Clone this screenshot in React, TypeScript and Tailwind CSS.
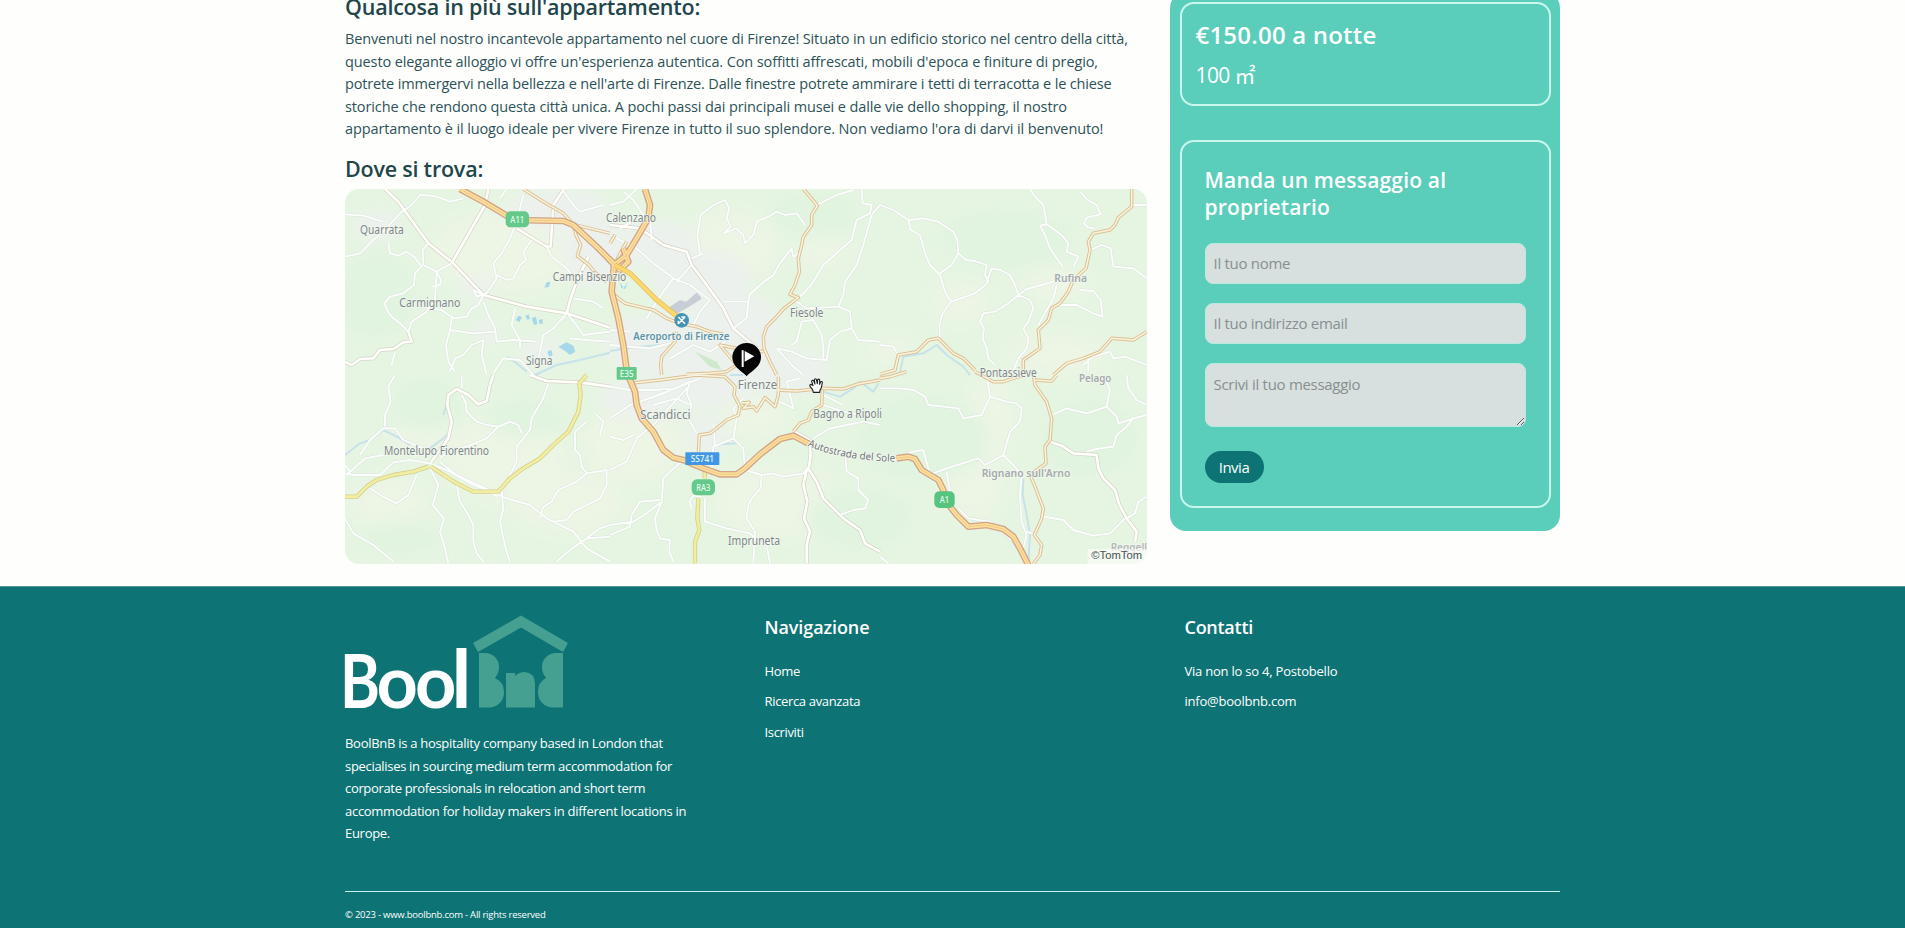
import type { ReactNode } from "react";

type RoadKind = "minor" | "main" | "secondary" | "yellow" | "motorway" | "link" | "river";

type Tile = { at: [number, number]; roads: Partial<Record<RoadKind, string>> };

const tiles: Tile[] = [
  {
    at: [0, 0],
    roads: {
      main: "M135 12L175 50L265 175L340 235L430 330L560 365L680 385L810 428M445 12L435 60L335 235M530 130L620 185L632 184L640 60L672 12M680 385L692 340L710 290L745 215M205 440L215 470L190 472L160 492L120 495L100 520L60 522L35 540L15 530",
      minor:
        "M15 88L70 92L130 110M15 215L60 205L100 165L130 140L180 85L215 60L240 30L270 32L290 35L330 50L370 40M145 170L150 205L175 212L200 200L222 215L245 245M265 175L248 195L250 240L290 260L303 285L300 300L275 305M248 240L225 265L222 300L190 325L150 335L133 355L145 382L160 400L180 415L205 440M205 440L215 410L260 380L285 345L290 260L335 235M260 370L305 375L340 400L380 395L395 370L415 360L430 330M430 330L400 315L410 335L440 325L470 280L460 235L485 205L510 160L530 110L550 30M430 350L445 390L465 430L470 470L520 465L590 470M335 400L330 435L400 445L465 440M330 435L318 480L325 530L345 560M430 465L395 480L370 510L345 520L330 560M430 465L425 510L440 570M525 370L515 420L540 465L540 490M680 385L640 430L610 450L595 520M685 390L705 415L730 450L810 440M575 165L550 200L558 225L540 240L520 280L500 285L470 270M620 185L635 215L680 250L710 290M672 20L700 60L720 80L790 60M480 40L500 12M155 540L165 500M460 565L490 520L540 525L580 570M690 460L740 465L810 470M700 340L760 350L790 370",
      motorway: "M360 12L430 50L500 92L530 105L670 108L700 120L770 185L820 235",
      secondary: "M550 12L610 50L670 85L700 118L810 145M700 118L708 150L722 180L712 213L745 238L765 262L800 290",
      river: "M585 570L650 540L720 525L810 503M500 515L530 535L560 560",
    },
  },
  {
    at: [810, 0],
    roads: {
      main: "M0 120L90 130L160 180L230 200L245 240L290 300L340 370L370 430L440 490",
      minor:
        "M0 150L80 190L130 235L190 280L240 300L300 345M0 60L40 50L80 12M125 165L120 100M40 20L70 45L100 90L30 130M270 205L262 150L272 90L310 60L345 45L358 70L350 100L362 125L340 145L378 130L400 150L405 175L430 150L440 110L475 95L500 80L525 90L560 85L585 120M245 220L280 205M410 390L418 330L450 300L490 270L510 235L545 190L550 215L565 205M755 12L758 55L785 60L780 85L740 105L725 165L690 195L640 240L600 305L560 345M810 60L785 90L760 180L740 240L705 290L700 330L685 365M560 350L590 370L685 365L720 380L725 430L690 440L660 465L650 525L590 520L545 500L500 490M725 430L745 465L810 470M620 60L680 30L730 15M545 480L560 470L575 410L610 405L635 450L640 490L640 520M190 280L160 320L140 350L110 400M370 430L410 400L415 350L340 350M500 490L545 540L580 570M300 345L270 380L250 420M245 240L200 290M0 435L60 440M0 480L120 490L200 470M360 460L300 500L250 480L180 520",
      motorway: "M105 12L120 60L115 100L80 160L50 210L12 240L5 320L25 400L40 480L52 570M40 190L55 230L30 255L-5 220",
      link: "M15 240L60 265L140 345L215 405",
      secondary:
        "M0 320L45 355L130 375L170 400L210 415L260 425L300 440L340 448M580 12L600 35L622 62L605 90L605 120L580 155L575 180L565 220L568 260L555 300L540 328L565 338L520 372L500 395L470 425L460 455L462 490L480 530L500 570M200 440L195 470L155 515L152 540L155 570M230 568L300 565L350 560L380 540L330 480L370 488L460 500M15 150L0 175M50 170L20 225",
      river: "M0 498L60 488L170 478",
    },
  },
  {
    at: [1620, 0],
    roads: {
      minor:
        "M0 60L40 75L85 105L130 100L175 110L220 140L232 165L235 205L215 240L180 265M85 105L92 135L120 150L135 205L150 240L180 270L195 320L213 350L188 385L178 420L180 460M235 205L258 225L285 228L320 240L315 270L325 290L310 305L285 325L215 350M320 290L335 250L362 255L390 270L405 300L415 330L450 345L460 370L445 410L430 430L445 460L440 490M415 330L440 312L485 300L520 290L560 275M415 330L385 355L345 380L310 385L300 410L312 430L308 460L320 490L325 520L345 540M450 12L465 35L490 60L500 118L480 122L495 150L510 190L530 220L548 245M500 118L545 150L565 175L560 200L595 215L580 245M600 20L622 45L650 60L662 88L620 98L612 115L625 128L645 130M630 195L665 180L692 190L700 245L760 250L800 280M755 60L800 60M600 315L640 318L662 345L668 395L640 385L590 360L535 360M610 540L640 515L690 500L700 520L735 515L800 540M0 480L40 485L55 510M530 300L520 340L475 420M440 490L415 520L400 560M625 515L625 560",
      secondary:
        "M755 12L755 65L715 98L705 120L690 135L640 145L625 170L630 195L618 250L580 285L565 320L540 355L515 370L505 405L475 435L480 490L430 525L430 570M0 568L45 555L55 510L110 500L145 465L175 460L220 505L250 520L285 555M520 570L560 535L610 520L660 500L695 460L760 465L800 440",
      river: "M60 560L70 515L130 505L170 480L200 510L250 545L270 570",
    },
  },
  {
    at: [0, 570],
    roads: {
      main: "M460 0L450 30L440 78L415 88L385 60L350 42L325 60L322 90L335 140L325 190L300 225L270 265M570 0L620 18L720 22L810 35",
      minor:
        "M165 0L145 35L152 80L135 120L135 155M365 0L365 40M365 60L378 85L380 110L410 140L440 150L475 155L440 190L380 215L330 225L300 250M475 155L510 140L535 150L545 175M625 25L610 70L575 130L570 165L530 215L530 260L505 310L485 350L490 400L480 440L490 490L500 530L510 560M15 295L40 300L120 300L160 262L210 255L270 265L330 290L400 330L500 370L570 390L620 430L700 470L740 520L810 560M300 262L350 300L480 360M270 280L295 330L278 390L312 430L300 470L315 520L325 565M350 325L358 375L385 420L400 450L400 500L410 535L430 560M15 430L40 475L100 510L160 560M60 240L90 195L130 160L165 160L190 195L250 220M20 300L75 250L130 240M30 290L15 270M90 340L130 365L170 385L205 360L230 300M740 140L705 170L705 225L720 240L725 275L740 295L710 320L655 345L635 380L610 395L600 430M740 295L800 285L800 330L780 370L740 390L700 410L680 435L640 440M650 560L690 525L740 490L810 485M740 490L780 460L810 450M765 115L790 140L780 180M470 365L440 345",
      yellow:
        "M15 365L50 365L80 335L110 315L160 300L220 290L265 275M272 274L310 300L350 325L400 350L475 350L510 310L550 280L600 250L640 210L685 170L715 110L722 60L718 25L740 0",
      river: "M15 240L60 205L90 195L130 165L170 185L210 210M270 220L310 190L320 180M320 90L310 120",
    },
  },
  {
    at: [810, 570],
    roads: {
      main: "M590 285L580 330L592 380L582 430L600 470L590 510L590 565M598 285L620 320L640 370L680 410L700 430L750 465L765 505L810 530M555 170L598 195L602 240L595 290",
      minor:
        "M0 35L60 45L130 45L200 40M0 130L30 110L60 90L150 60L240 20M90 80L170 50L270 10M0 185L40 195L70 180M0 285L50 260L80 190L130 150L240 30M240 20L230 55L245 90L235 130L260 175M130 90L200 70L240 90M380 130L370 190L310 215L305 290M310 150L315 210M215 260L180 290L160 310L155 380L110 415L70 440L0 450M155 380L135 430L140 465L150 490L180 495L178 530L190 560M0 480L60 455L65 420L90 380L150 375M370 190L400 220L405 285L455 300L490 295L520 305L580 295L600 270M455 300L452 340L425 370L415 390L410 430L435 470L430 565M285 370L285 440L350 460L420 475L445 500L470 510L480 565M610 190L660 160L710 150L760 140L810 150M705 230L710 290L745 310L745 345L775 375L765 400L730 405L690 420M245 400L238 380L250 362L275 365M750 120L700 110L640 90M400 70L370 100L380 130M510 80L550 100L530 20L570 10M640 60L700 90",
      motorway: "M50 -10L75 50L80 90L95 130L130 170L160 225L190 248L220 255L280 280L330 298L380 298L405 280L450 238L510 192L550 182L600 208",
      secondary:
        "M60 25L150 15L260 0L345 5L375 35L372 60L390 95L385 120L350 135L320 160L300 175L268 180L265 240M395 85L418 82L400 100L430 95L440 108L465 68L495 95L505 60L505 5M500 45L560 48L640 40L700 42L740 28L810 15M637 45L635 90L605 110L595 135L570 145L550 170",
      yellow: "M283 280L285 310M265 370L262 430L268 465L255 500L255 565",
      river: "M360 0L400 0M640 50L690 65L730 40L750 20L790 50L805 25M330 208L380 205",
    },
  },
  {
    at: [1620, 570],
    roads: {
      main: "M510 200L545 212L580 235L650 240L655 280L670 310L705 345L718 390L740 430L770 470L765 500",
      minor:
        "M0 40L60 40L100 45L135 65L145 90L190 95L235 100L250 130L305 120L330 65L320 0M330 65L380 80L410 85L425 100L420 140L390 170L370 240M145 300L200 280L295 250L315 270L370 240L400 270L425 300L420 360L425 440L440 480L430 520M150 300L130 225L100 230L50 245M200 290L210 350M515 120L560 100L620 115L680 95L710 125L715 145L760 130L800 120M680 95L690 45L670 0M740 0L745 40L770 75L800 90M620 230L650 222L700 215L710 180L735 160L760 130M490 425L550 435L580 465L640 482L690 475L735 430M740 430L765 415L775 380L800 365M235 400L265 430L330 440L400 500L415 525M440 470L470 480M0 545L25 565",
      motorway: "M50 250L85 245L105 252L125 285L175 315L190 345L195 375L230 420L265 455L320 450L370 462L400 485L420 520L445 570",
      secondary:
        "M460 0L465 30L500 80L515 130L510 195L495 215L498 265L450 300L465 335L490 400L485 430L463 480L485 510L480 540L460 567M460 15L515 18L530 0M285 -10L340 20L370 20L430 0M0 10L30 5L80 -10",
      river: "M430 310L428 360L440 420L450 480L445 560",
    },
  },
];

const strokes: { kind: RoadKind; color: string; width: number }[] = [
  { kind: "river", color: "#c6e2ea", width: 6 },
  { kind: "minor", color: "#dde6de", width: 9 },
  { kind: "main", color: "#d3d2c6", width: 12 },
  { kind: "minor", color: "#fcfefc", width: 5.5 },
  { kind: "main", color: "#fffefa", width: 8 },
  { kind: "secondary", color: "#dcc191", width: 10.5 },
  { kind: "secondary", color: "#f9f3e2", width: 4.5 },
  { kind: "yellow", color: "#d6d08a", width: 13 },
  { kind: "yellow", color: "#f1eda2", width: 8 },
  { kind: "motorway", color: "#d3a287", width: 20 },
  { kind: "motorway", color: "#fbe09a", width: 12 },
  { kind: "motorway", color: "#edb981", width: 2 },
  { kind: "link", color: "#e2b765", width: 15 },
  { kind: "link", color: "#fbd869", width: 11 },
];

const urban: [number, number, number, number][] = [
  [650, 70, 150, 60], [760, 200, 90, 110], [950, 180, 120, 70], [1080, 280, 150, 80], [1180, 420, 150, 90],
  [960, 480, 170, 90], [1300, 560, 170, 70], [900, 640, 120, 60], [110, 120, 70, 40], [410, 310, 50, 30],
  [600, 500, 60, 35], [1100, 600, 110, 70], [1100, 760, 60, 60], [440, 440, 40, 30],
];
const pale: [number, number, number, number][] = [
  [500, 200, 230, 120], [1180, 180, 140, 100], [1450, 200, 80, 50], [1860, 350, 90, 60], [2150, 510, 150, 60],
  [500, 820, 180, 130], [680, 950, 170, 90], [880, 780, 150, 110], [1300, 950, 180, 110], [1900, 900, 90, 100],
  [150, 950, 120, 70], [1240, 700, 100, 60], [260, 760, 110, 50], [1950, 700, 70, 130], [1650, 500, 80, 40], [2150, 300, 90, 50],
];
const woods: [number, number, number, number][] = [
  [110, 330, 120, 130], [260, 660, 110, 80], [1420, 90, 140, 70], [1750, 760, 200, 130], [2250, 760, 150, 120],
  [1560, 1000, 160, 90], [560, 700, 120, 60], [180, 1060, 120, 50], [2000, 160, 200, 90],
];

type Label = [string, number, number, number, number?, number?, string?];
const labels: Label[] = [
  ["Quarrata", 60, 146, 131],
  ["Carmignano", 178, 365, 183],
  ["Calenzano", 798, 110, 150],
  ["Campi Bisenzio", 638, 289, 221],
  ["Signa", 558, 541, 79],
  ["Fiesole", 1350, 395, 100],
  ["Aeroporto di Firenze", 880, 464, 288, 30, 600, "#5b93aa"],
  ["Rufina", 2143, 291, 98, 34, 600, "#a3aaa9"],
  ["Pontassieve", 1919, 577, 171],
  ["Pelago", 2217, 590, 97, 33, 600, "#a3aaa9"],
  ["Firenze", 1193, 613, 119],
  ["Scandicci", 900, 701, 152],
  ["Bagno a Ripoli", 1420, 698, 206],
  ["Montelupo Fiorentino", 132, 809, 315],
  ["Impruneta", 1164, 1081, 156],
  ["Rignano sull'Arno", 1925, 876, 266, 33, 600, "#a3aaa9"],
  ["Reggello", 2312, 1099, 128, 34, 600, "#b3b9b6"],
];

function Shield({ x, y, w, h, fill, r, children }: { x: number; y: number; w: number; h: number; fill: string; r: number; children: string }) {
  return (
    <g>
      <rect x={x} y={y} width={w} height={h} rx={r} fill={fill} />
      <text x={x + w / 2} y={y + h / 2 + 10} textAnchor="middle" fontSize={28} fontWeight={500} fill="#e8fbef" textLength={children.length * 14} lengthAdjust="spacingAndGlyphs">
        {children}
      </text>
    </g>
  );
}

function MapView() {
  return (
    <svg viewBox="15 12 2406 1125" className="mt-[7.500px] block h-[375px] w-[802px] rounded-[14px]" fontFamily="'Noto Sans', 'Open Sans', sans-serif" role="img">
      <defs>
        <filter id="soft" x="-20%" y="-20%" width="140%" height="140%">
          <feGaussianBlur stdDeviation="22" />
        </filter>
        <path id="sole" d="M1403 783C1470 812 1560 828 1680 831" />
      </defs>
      <rect x={15} y={12} width={2406} height={1125} fill="#e6f5e2" />
      <g filter="url(#soft)">
        {pale.map(([x, y, rx, ry]) => <ellipse key={`${x}-${y}`} cx={x} cy={y} rx={rx} ry={ry} fill="#edf5e5" />)}
        {woods.map(([x, y, rx, ry]) => <ellipse key={`${x}-${y}`} cx={x} cy={y} rx={rx} ry={ry} fill="#e1f4df" />)}
        {urban.map(([x, y, rx, ry]) => <ellipse key={`${x}-${y}`} cx={x} cy={y} rx={rx} ry={ry} fill="#edf1ee" />)}
      </g>
      <path d="M990 370L1020 350L1040 355L1070 328L1080 340L1040 365L1010 382Z" fill="#c8ced6" stroke="#c8ced6" strokeWidth={8} strokeLinejoin="round" />
      <path d="M1065 500L1130 530L1145 555L1110 545Z" fill="#cfe9cc" />
      <g fill="#a6d8ea">
        <path d="M613 308L620 292L632 290L626 306ZM527 405L535 392L546 396L538 412ZM556 392L566 388L570 402L562 404ZM575 400L588 395L592 418L582 420ZM596 405L608 402L608 416L598 416ZM655 485L680 472L700 482L706 500L690 510L672 496ZM622 500L634 494L638 510L628 515Z" />
        <path d="M840 290L850 310L865 290L855 312L843 308Z" />
      </g>
      {strokes.map((s, i) => (
        <g key={i} fill="none" stroke={s.color} strokeWidth={s.width} strokeLinejoin="round" strokeLinecap="butt">
          {tiles.map((t) =>
            t.roads[s.kind] ? <path key={t.at.join()} d={t.roads[s.kind]} transform={`translate(${t.at[0]} ${t.at[1]})`} /> : null,
          )}
        </g>
      ))}
      {labels.map(([text, x, y, w, size = 39, weight = 400, color = "#7d8688"]) => (
        <text key={text} x={x} y={y} fontSize={size} fontWeight={weight} fill={color} textLength={w} lengthAdjust="spacingAndGlyphs" stroke="#f4f8f2" strokeWidth={4} strokeLinejoin="round" paintOrder="stroke">
          {text}
        </text>
      ))}
      <text fontSize={31} fill="#6f7375" stroke="#f4f8f2" strokeWidth={5} paintOrder="stroke" textLength={268}>
        <textPath href="#sole" textLength={268} lengthAdjust="spacingAndGlyphs">Autostrada del Sole</textPath>
      </text>
      <Shield x={497} y={79} w={70} h={48} r={14} fill="#64c98a">A11</Shield>
      <Shield x={830} y={546} w={60} h={38} r={3} fill="#64c98a">E35</Shield>
      <Shield x={1036} y={802} w={102} h={38} r={2} fill="#4297e4">SS741</Shield>
      <Shield x={1055} y={883} w={70} h={48} r={16} fill="#64c98a">RA3</Shield>
      <Shield x={1783} y={919} w={61} h={50} r={15} fill="#56c47f">A1</Shield>
      <circle cx={1025} cy={406} r={22} fill="#4593b8" />
      <path d="M1015 396L1035 416M1035 396L1015 416M1024 396L1036 396M1015 407L1015 417" stroke="#fff" strokeWidth={4.5} fill="none" />
      <path d="M1220 574C1212 562 1177 548 1177 517A43 43 0 0 1 1263 517C1263 548 1228 562 1220 574Z" fill="#050505" />
      <path d="M1205 496H1211V546H1205ZM1214 498L1243 514L1214 530Z" fill="#fff" />
      <g transform="translate(1408 578)" fill="#fff" stroke="#1d2425" strokeWidth={3.4} strokeLinejoin="round" strokeLinecap="round">
        <path d="M12 44L10 36L2 26Q0 20 6 20L11 24L7 11Q8 6 13 9L17 19L15 6Q17 1 21 5L24 18L25 6Q28 2 31 7L31 20L34 12Q38 10 39 15L36 30L32 38L31 44Z" />
      </g>
      <rect x={2243} y={1092} width={178} height={45} fill="#fff" fillOpacity={0.6} />
      <text x={2254} y={1122} fontSize={35} fill="#4b5254" fontFamily="'Liberation Sans', sans-serif" textLength={152} lengthAdjust="spacingAndGlyphs">©TomTom</text>
    </svg>
  );
}

function Logo() {
  return (
    <svg viewBox="0 0 224 94" className="block h-[94px] w-[224px] overflow-visible" role="img">
      <g fill="#fff" fontFamily="Lato, sans-serif" fontWeight={700}>
        <text x={-5} y={92.5} fontSize={75} textLength={40} lengthAdjust="spacingAndGlyphs">B</text>
        <text x={31.5} y={92.5} fontSize={72}>o</text>
        <text x={70} y={92.5} fontSize={72}>o</text>
        <text x={106.5} y={92.5} fontSize={80}>l</text>
      </g>
      <g fill="#45a092">
        <path d="M128 28L176 0.5L223 28L218 37L176 12.5L133 37Z" />
        <path d="M134 38H140A14 14 0 0 1 154 52Q154 58 150 63Q159 67 159 77A15 15 0 0 1 144 92.500H134Z" />
        <path d="M218 38H211A14 14 0 0 0 197 52Q197 58 201 63Q193 67 193 77A15 15 0 0 0 208 92.500H218Z" />
        <path d="M161 92.500V58H170V61Q174 57 180 57Q190 58 190 69V92.500Z" />
      </g>
    </svg>
  );
}

function Line({ children, className = "" }: { children: ReactNode; className?: string }) {
  return <span className={`block whitespace-nowrap ${className}`}>{children}</span>;
}

const field = "block w-full rounded-[8px] border border-[#b9eae1] bg-[#d7dfdf] px-[8px] text-[15px] tracking-[-0.29px] text-[#2b4a4c] placeholder:text-[#87908f] placeholder:opacity-100 outline-none";

export default function App() {
  return (
    <div className="h-[928px] overflow-hidden bg-[#fefefd] font-['Open_Sans','Noto_Sans',sans-serif]">
      <main className="-mt-2 ml-[345px] flex h-[594px] w-[1215px] items-start justify-between">
        <section className="w-[802px] text-[#2c5257]">
          <h2 className="pt-[2px] text-[21.5px] font-semibold leading-[26px] tracking-[-0.22px] text-[#1f464b]">Qualcosa in più sull'appartamento:</h2>
          <p className="mt-[8px] text-[14.5px] leading-[22.5px]">
            <Line className="tracking-[-0.135px]">Benvenuti nel nostro incantevole appartamento nel cuore di Firenze! Situato in un edificio storico nel centro della città,</Line>
            <Line className="tracking-[-0.109px]">questo elegante alloggio vi offre un'esperienza autentica. Con soffitti affrescati, mobili d'epoca e finiture di pregio,</Line>
            <Line className="tracking-[-0.16px]">potrete immergervi nella bellezza e nell'arte di Firenze. Dalle finestre potrete ammirare i tetti di terracotta e le chiese</Line>
            <Line className="tracking-[-0.115px]">storiche che rendono questa città unica. A pochi passi dai principali musei e dalle vie dello shopping, il nostro</Line>
            <Line className="tracking-[-0.11px]">appartamento è il luogo ideale per vivere Firenze in tutto il suo splendore. Non vediamo l'ora di darvi il benvenuto!</Line>
          </p>
          <h2 className="mt-[15px] text-[21.5px] font-semibold leading-[26px] tracking-[-0.22px] text-[#1f464b]">Dove si trova:</h2>
          <MapView />
        </section>

        <aside className="h-[539px] w-[390.500px] rounded-[16px] bg-[#5bcdbb] p-[10px] pr-[9px] text-white">
          <div className="h-[104px] rounded-[14px] border-2 border-[#c9f7ee] px-[14px] pt-[17px]">
            <p className="text-[24px] font-semibold leading-[28px] tracking-[0.2px]">€150.00 a notte</p>
            <p className="mt-[12px] font-['Open_Sans','Noto_Sans_CJK_JP',sans-serif] text-[21px] leading-[28px] tracking-[-0.6px]">
              100 ㎡
            </p>
          </div>
          <form className="mt-[33.500px] h-[368px] rounded-[14px] border-2 border-[#c9f7ee] px-[23px] pt-[25px]" onSubmit={(e) => e.preventDefault()}>
            <h3 className="text-[21px] font-semibold leading-[27px] tracking-[0.18px]">Manda un messaggio al proprietario</h3>
            <input className={`${field} mt-[22px] h-[41px]`} placeholder="Il tuo nome" />
            <input className={`${field} mt-[19px] h-[41px]`} placeholder="Il tuo indirizzo email" />
            <textarea className={`${field} mt-[19px] h-[64px] resize pt-[9px] leading-[22.5px]`} placeholder="Scrivi il tuo messaggio" />
            <button type="submit" className="mt-[24px] h-[32px] w-[59px] rounded-full bg-[#0d7374] text-[15px] leading-[22px] tracking-[-0.5px] text-white">Invia</button>
          </form>
        </aside>
      </main>

      <footer className="h-[342px] border-t border-[#4f9a98] bg-[#0d7374] text-white">
        <div className="ml-[345px] w-[1215px]">
          <div className="grid h-[304px] grid-cols-[419.500px_420px_375.500px] pt-[28px]">
            <div>
              <Logo />
              <p className="mt-[23px] text-[13px] leading-[22.5px] tracking-[-0.286px]">
                <Line>BoolBnB is a hospitality company based in London that</Line>
                <Line className="tracking-[-0.31px]">specialises in sourcing medium term accommodation for</Line>
                <Line className="tracking-[-0.33px]">corporate professionals in relocation and short term</Line>
                <Line>accommodation for holiday makers in different locations in</Line>
                <Line>Europe.</Line>
              </p>
            </div>
            <nav className="text-[13px] leading-[22.5px]">
              <h4 className="text-[18px] font-semibold leading-6 tracking-[-0.1px]">Navigazione</h4>
              <ul className="mt-[20.500px] flex flex-col gap-[8.200px] tracking-[-0.34px]">
                <li>Home</li>
                <li>Ricerca avanzata</li>
                <li>Iscriviti</li>
              </ul>
            </nav>
            <div className="text-[13px] leading-[22.5px]">
              <h4 className="text-[18px] font-semibold leading-6 tracking-[-0.27px]">Contatti</h4>
              <ul className="mt-[20.500px] flex flex-col gap-[8.200px] tracking-[-0.22px]">
                <li>Via non lo so 4, Postobello</li>
                <li>info@boolbnb.com</li>
              </ul>
            </div>
          </div>
          <p className="border-t border-[#c9f0ec] pt-[15px] text-[9.5px] leading-4 tracking-[-0.23px]">© 2023 - www.boolbnb.com - All rights reserved</p>
        </div>
      </footer>
    </div>
  );
}
